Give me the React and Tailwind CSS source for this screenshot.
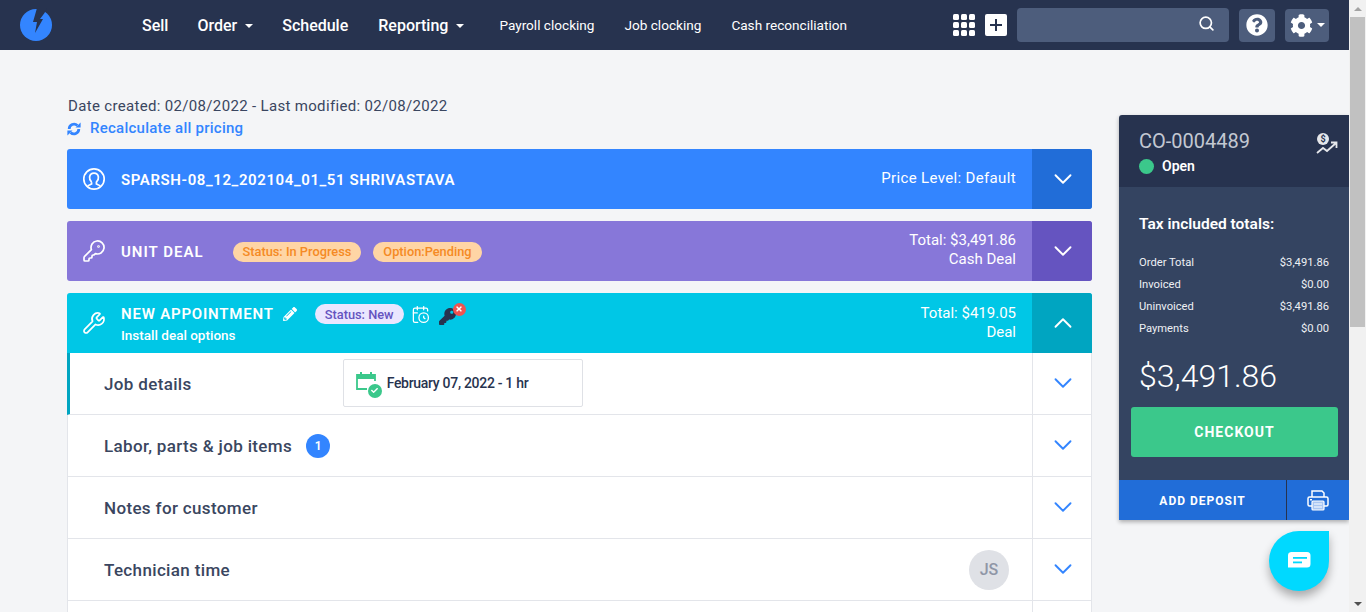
import { ChevronDown, ChevronUp, Search, Wrench, KeyRound, CalendarClock } from 'lucide-react';
import { FaCog, FaQuestionCircle, FaPencilAlt, FaKey, FaCheck, FaTimes } from 'react-icons/fa';

const font = { fontFamily: 'Roboto, "Liberation Sans", sans-serif' };

const navMain = [
  { name: 'Sell', className: 'ml-[142px]' },
  { name: 'Order', className: 'ml-[29px]', caret: true },
  { name: 'Schedule', className: 'ml-[29px]' },
  { name: 'Reporting', className: 'ml-[30px]', caret: true },
];

const navSub = [
  { name: 'Payroll clocking', className: 'ml-[35px]' },
  { name: 'Job clocking', className: 'ml-[30px]' },
  { name: 'Cash reconciliation', className: 'ml-[30px]' },
];

const totals = [
  { label: 'Order Total', value: '$3,491.86' },
  { label: 'Invoiced', value: '$0.00' },
  { label: 'Uninvoiced', value: '$3,491.86' },
  { label: 'Payments', value: '$0.00' },
];

const Caret = () => (
  <span className="ml-2 inline-block h-0 w-0 border-x-[4px] border-t-[4px] border-x-transparent border-t-white" />
);

const Logo = () => (
  <svg width="34" height="34" viewBox="0 0 34 34">
    <circle cx="17" cy="17" r="16" fill="#3385ff" />
    <path d="M18 0 L28 0 L25.5 5 L21 11 L24 11 L16 25 L18 14 L14 14 Z" fill="#27334f" />
  </svg>
);

const SyncIcon = () => (
  <svg width="14" height="14" viewBox="0 0 14 14" fill="none" className="mr-[9px]">
    <path d="M2.2 7 A4.8 4.8 0 0 1 10.4 3.6" stroke="#3385ff" strokeWidth="2.8" />
    <path d="M11.8 7 A4.8 4.8 0 0 1 3.6 10.4" stroke="#3385ff" strokeWidth="2.8" />
    <path d="M8.5 5.6 L13.6 5.6 L13.6 0.6Z" fill="#3385ff" />
    <path d="M5.5 8.4 L0.4 8.4 L0.4 13.4Z" fill="#3385ff" />
  </svg>
);

const CustomerIcon = () => (
  <svg width="24" height="24" viewBox="0 0 24 24" fill="none" stroke="white" strokeWidth="1.7">
    <circle cx="12" cy="12" r="10.2" />
    <path d="M9.6 15.2 C7.8 13.5 7.4 11.6 7.6 10 C8 7.4 9.8 6.2 12 6.2 C14.2 6.2 16 7.4 16.4 10 C16.6 11.6 16.2 13.5 14.4 15.2 L14.4 17 C15.6 17.6 17 18 18.4 18.8 M9.6 15.2 L9.6 17 C8.4 17.6 7 18 5.6 18.8" />
  </svg>
);

const TrendIcon = () => (
  <svg width="22" height="24" viewBox="0 0 22 24" fill="none">
    <circle cx="7" cy="7" r="6" fill="#e5e7eb" />
    <text x="7" y="10" textAnchor="middle" fontSize="9" fontWeight="700" fill="#27334f" style={font}>$</text>
    <path d="M1 21 L7 16 L11 19 L20 11 M15 10.5 L20.5 10.5 L20.5 16" stroke="#e5e7eb" strokeWidth="1.8" />
  </svg>
);

const GreenCalendar = () => (
  <svg width="26" height="26" viewBox="0 0 26 26" fill="none">
    <path d="M12 19 L2 19 L2 5 L20 5 L20 11" stroke="#3bc88b" strokeWidth="1.8" />
    <path d="M2 5 H20 V9 H2Z" fill="#3bc88b" />
    <path d="M6 2 V6 M16 2 V6" stroke="#3bc88b" strokeWidth="2" />
  </svg>
);

const PrintIcon = () => (
  <svg width="22" height="21" viewBox="0 0 22 21" fill="none">
    <path d="M5 7 V1 H15 L17 3 V7" stroke="white" strokeWidth="1.5" />
    <path d="M5 16 H2.5 A1.5 1.5 0 0 1 1 14.5 V8.5 A1.5 1.5 0 0 1 2.5 7 H19.5 A1.5 1.5 0 0 1 21 8.5 V14.5 A1.5 1.5 0 0 1 19.5 16 H17" stroke="white" strokeWidth="1.5" />
    <rect x="5" y="11" width="12" height="9" rx="1" fill="#a9c6f2" stroke="white" strokeWidth="1.2" />
    <path d="M7 14 H15 M7 17 H15" stroke="white" strokeWidth="1" />
    <rect x="3" y="9" width="2" height="1.5" fill="white" />
  </svg>
);

const ChatIcon = () => (
  <svg width="24" height="20" viewBox="0 0 24 20">
    <path d="M4 1 H20 A3.5 3.5 0 0 1 23.5 4.5 V13 A3.5 3.5 0 0 1 20 16.5 H1 V4.5 A3.5 3.5 0 0 1 4 1Z" fill="white" />
    <rect x="6" y="6" width="14" height="1.8" fill="#00d9ff" />
    <rect x="6" y="10.5" width="9" height="1.8" fill="#00d9ff" />
  </svg>
);

const Pill = ({ className, children }) => (
  <span className={`inline-flex h-5 items-center rounded-full px-2.5 text-[12.8px] font-medium ${className}`}>
    {children}
  </span>
);

const HeaderCard = ({ color, toggleColor, up, icon, children, right }) => (
  <div className={`flex h-[60px] items-stretch overflow-hidden ${color}`}>
    <div className="flex w-[54px] shrink-0 items-center justify-center">{icon}</div>
    <div className="min-w-0 flex-1">{children}</div>
    <div className="pr-4 text-right text-[15px] leading-[19px] text-white">{right}</div>
    <div className={`flex w-[60px] shrink-0 items-center justify-center pl-0.5 ${toggleColor}`}>
      {up ? <ChevronUp size={30} color="white" strokeWidth={1.5} /> : <ChevronDown size={30} color="white" strokeWidth={1.5} />}
    </div>
  </div>
);

const JobRow = ({ title, active, children, right }) => (
  <div className={`flex h-[62px] items-stretch border-b border-[#e3e5ea] bg-white ${active ? '-ml-px border-l-[3px] border-l-[#00a5c1]' : ''}`}>
    <div className={`flex flex-1 items-center pr-[23px] ${active ? 'pl-[34px]' : 'pl-9'}`}>
      <span className="pt-0.5 text-[17px] font-medium tracking-[0.35px] text-[#3a4660]">{title}</span>
      {children}
      <div className="ml-auto">{right}</div>
    </div>
    <div className="flex w-[59px] shrink-0 items-center justify-center border-l border-[#e3e5ea] pb-0.5 pl-0.5">
      <ChevronDown size={30} color="#3385ff" strokeWidth={1.5} />
    </div>
  </div>
);

export default function App() {
  return (
    <div className="relative flex h-[612px] overflow-hidden bg-[#f4f5f7]" style={font}>
      <div className="flex min-w-0 flex-1 flex-col">
        {/* Top nav */}
        <nav className="flex h-[50px] shrink-0 items-center bg-[#27334f] text-white">
          <div className="ml-[19px] flex h-[34px] w-[34px] items-center justify-center"><Logo /></div>
          <div className="ml-[-53px] flex items-center pt-0.5">
            {navMain.map((item) => (
              <a key={item.name} className={`flex items-center text-base font-medium ${item.className}`}>
                {item.name}
                {item.caret && <Caret />}
              </a>
            ))}
            {navSub.map((item) => (
              <a key={item.name} className={`-mt-0.5 text-[13.6px] ${item.className}`}>{item.name}</a>
            ))}
          </div>
          <div className="ml-auto flex items-center pr-5">
            <div className="grid grid-cols-3 gap-[2px]">
              {Array.from({ length: 9 }).map((_, i) => (
                <span key={i} className="h-[6px] w-[6px] rounded-[1.5px] bg-white" />
              ))}
            </div>
            <div className="ml-2.5 flex h-[22px] w-[22px] items-center justify-center rounded-[2px] bg-white text-[#27334f]">
              <svg width="14" height="14" viewBox="0 0 14 14"><path d="M7 1 V13 M1 7 H13" stroke="#27334f" strokeWidth="2" /></svg>
            </div>
            <div className="ml-2.5 flex h-[34px] w-[212px] items-center justify-end rounded bg-[#4d5d7c] pr-[14px]">
              <Search size={17} color="white" strokeWidth={2.4} className="-mt-1" />
            </div>
            <div className="ml-2.5 flex h-[33px] w-9 items-center justify-center rounded bg-[#4d5d7c]">
              <FaQuestionCircle size={22} color="white" />
            </div>
            <div className="ml-2.5 flex h-[33px] w-11 items-center justify-center gap-1 rounded bg-[#4d5d7c]">
              <FaCog size={23} color="white" />
              <span className="h-0 w-0 border-x-[4px] border-t-[4px] border-x-transparent border-t-white" />
            </div>
          </div>
        </nav>

        <div className="flex min-h-0 flex-1 items-start">
          {/* Left column */}
          <main className="ml-[67px] w-[1025px] shrink-0 pt-[45px]">
            <div className="ml-px text-[15px] leading-[23px] tracking-[0.33px] text-[#3a4660]">
              Date created: 02/08/2022 - Last modified: 02/08/2022
            </div>
            <div className="mb-[10px] flex h-[21px] items-center text-[15px] font-medium tracking-[0.25px] text-[#3385ff]">
              <SyncIcon />
              Recalculate all pricing
            </div>

            <div className="flex flex-col gap-3">
              <div className="overflow-hidden rounded-[3px]">
                <HeaderCard
                  color="bg-[#3385ff]"
                  toggleColor="bg-[#216dd8]"
                  icon={<CustomerIcon />}
                  right={<div className="mt-[20px] tracking-[0.35px]">Price Level: Default</div>}
                >
                  <div className="flex h-full items-center pt-0.5 text-[15px] font-semibold tracking-[0.6px] text-white">
                    SPARSH-08_12_202104_01_51 SHRIVASTAVA
                  </div>
                </HeaderCard>
              </div>

              <div className="overflow-hidden rounded-[3px]">
                <HeaderCard
                  color="bg-[#8777d9]"
                  toggleColor="bg-[#6554c0]"
                  icon={<KeyRound size={24} color="white" strokeWidth={1.7} />}
                  right={<div className="mt-[10px]"><div>Total: $3,491.86</div><div>Cash Deal</div></div>}
                >
                  <div className="flex h-full items-center pt-0.5">
                    <span className="text-[15px] font-semibold tracking-[1px] text-white">UNIT DEAL</span>
                    <Pill className="ml-[29px] bg-[#ffd5a5] text-[#f58a24]">Status: In Progress</Pill>
                    <Pill className="ml-3 bg-[#ffd5a5] text-[#f58a24]">Option:Pending</Pill>
                  </div>
                </HeaderCard>
              </div>

              <div className="rounded-t-[3px] border-x border-[#e3e5ea]">
                <div className="-mx-px overflow-hidden rounded-t-[3px]">
                  <HeaderCard
                    color="bg-[#00c7e6]"
                    toggleColor="bg-[#00a5c1]"
                    up
                    icon={<Wrench size={24} color="white" strokeWidth={1.7} />}
                    right={<div className="mt-[11px]"><div>Total: $419.05</div><div>Deal</div></div>}
                  >
                    <div className="flex items-center pt-[10px]">
                      <span className="text-[15px] font-semibold tracking-[0.8px] text-white">NEW APPOINTMENT</span>
                      <FaPencilAlt size={14} color="white" className="ml-[9px]" />
                      <Pill className="ml-[18px] bg-[#eae6ff] text-[#6554c0]">Status: New</Pill>
                      <CalendarClock size={19} color="white" strokeWidth={1.6} className="ml-[7px]" />
                      <div className="relative ml-[9px] mt-[4px]">
                        <FaKey size={17} color="#27334f" />
                        <span className="absolute -right-[10px] -top-[5px] flex h-[13px] w-[13px] items-center justify-center rounded-full bg-[#ef5350]">
                          <FaTimes size={8} color="white" />
                        </span>
                      </div>
                    </div>
                    <div className="-mt-px text-[13.5px] font-medium leading-[20px] text-white">Install deal options</div>
                  </HeaderCard>
                </div>

                <JobRow title="Job details" active>
                  <div className="-mt-[2px] ml-[151px] flex h-12 w-[240px] items-center rounded-[2px] border border-[#dfe1e6] pl-[11px]">
                    <div className="relative h-[26px] w-[26px]">
                      <GreenCalendar />
                      <span className="absolute bottom-[-2px] right-[-1px] flex h-[14px] w-[14px] items-center justify-center rounded-full bg-[#3bc88b]">
                        <FaCheck size={7} color="white" />
                      </span>
                    </div>
                    <span className="ml-[6px] text-sm font-medium tracking-[-0.3px] text-[#27334f]">February 07, 2022 - 1 hr</span>
                  </div>
                </JobRow>
                <JobRow title="Labor, parts & job items">
                  <span className="ml-3.5 flex h-6 w-6 items-center justify-center rounded-full bg-[#3385ff] text-xs font-semibold text-white">1</span>
                </JobRow>
                <JobRow title="Notes for customer" />
                <JobRow
                  title="Technician time"
                  right={
                    <span className="flex h-10 w-10 items-center justify-center rounded-full bg-[#dfe1e6] text-base font-medium text-[#8f96a6]">JS</span>
                  }
                />
                <JobRow title="" />
              </div>
            </div>
          </main>

          {/* Order summary */}
          <aside className="ml-[27px] mt-[65px] w-[230px] shrink-0 overflow-hidden rounded-tl-[3px] shadow-[0_2px_4px_rgba(0,0,0,0.3)]">
            <div className="flex h-[72px] justify-between bg-[#27334f] pl-5 pr-[11px] pt-[14px]">
              <div>
                <div className="text-[20px] leading-[25px] text-[#c3c8d2]">CO-0004489</div>
                <div className="mt-[2px] flex items-center text-sm font-semibold text-white">
                  <span className="mr-2 h-[15px] w-[15px] rounded-full bg-[#3bc88b]" />
                  Open
                </div>
              </div>
              <div className="pt-[3px]"><TrendIcon /></div>
            </div>

            <div className="h-[293px] bg-[#344461] px-5 pt-[27px]">
              <div className="text-[15.5px] font-semibold leading-5 text-white">Tax included totals:</div>
              <div className="mt-[18px] flex flex-col">
                {totals.map((row) => (
                  <div key={row.label} className="flex h-[22px] items-center justify-between text-[11.2px] text-[#eef0f4]">
                    <span>{row.label}</span>
                    <span>{row.value}</span>
                  </div>
                ))}
              </div>
              <div className="mt-[16px] text-[32px] font-light leading-[40px] text-white">$3,491.86</div>
              <div className="-ml-2 mt-[11px] flex h-[50px] w-[207px] items-center justify-center rounded-[3px] bg-[#3bc88b] text-sm font-bold tracking-[1px] text-white">
                CHECKOUT
              </div>
            </div>

            <div className="flex h-10 bg-[#216dd8] text-white">
              <div className="flex w-[168px] items-center justify-center border-r border-[#27334f] pt-px text-xs font-bold tracking-[1px]">ADD DEPOSIT</div>
              <div className="flex flex-1 items-center justify-center">
                <PrintIcon />
              </div>
            </div>
          </aside>
        </div>
      </div>

      {/* Scrollbar */}
      <div className="flex w-[17px] shrink-0 flex-col items-center bg-[#f1f1f1]">
        <div className="flex h-[17px] items-center justify-center">
          <span className="h-0 w-0 border-x-[4px] border-b-[4px] border-x-transparent border-b-[#a3a3a3]" />
        </div>
        <div className="h-[310px] w-[15px] bg-[#c1c1c1]" />
        <div className="mt-auto flex h-[17px] items-center justify-center">
          <span className="h-0 w-0 border-x-[4px] border-t-[4px] border-x-transparent border-t-[#505050]" />
        </div>
      </div>

      {/* Chat bubble */}
      <div className="absolute left-[1269px] top-[531px] flex h-[60px] w-[60px] items-center justify-center rounded-full rounded-tr-[6px] bg-[#00d9ff] shadow-[0_6px_10px_rgba(0,0,0,0.3)]">
        <ChatIcon />
      </div>
    </div>
  );
}
